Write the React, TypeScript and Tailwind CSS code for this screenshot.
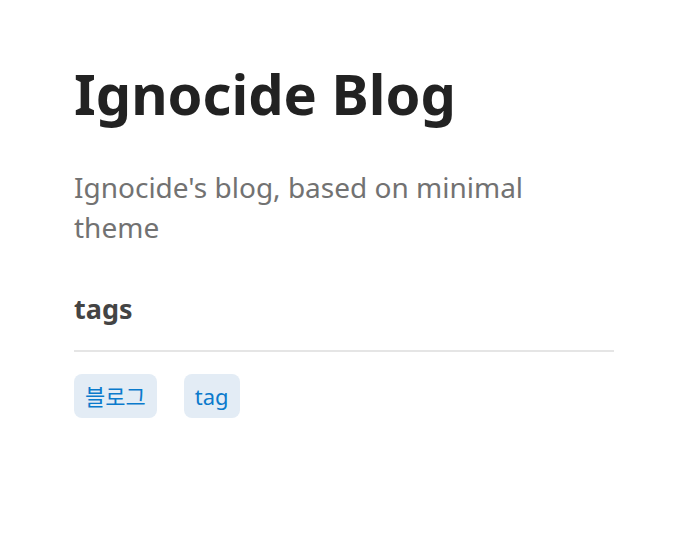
export default function App() {
  const tags = ["블로그", "tag"];

  return (
    <div
      className="min-h-[552px] bg-white pl-[74px] pt-[60px]"
      style={{ fontFamily: '"Noto Sans", "Noto Sans CJK KR", sans-serif' }}
    >
      <div className="w-[540px]">
        {/* Header */}
        <h1 className="text-[56px] font-bold leading-[1.2] text-[#222]">Ignocide Blog</h1>
        <p className="mt-[40px] w-[500px] text-[28px] leading-[40px] text-[#727272]">
          Ignocide's blog, based on minimal theme
        </p>

        {/* Tags */}
        <h2 className="mt-[42px] text-[27px] font-bold leading-[39px] text-[#444]">tags</h2>
        <div className="mt-[22px] h-[2px] bg-[#e5e5e5]" />
        <div className="mt-[22px] flex gap-[27px]">
          {tags.map((t) => (
            <span
              key={t}
              className="flex h-[44px] items-center rounded-[8px] bg-[#e3ecf5] px-[11px] text-[22px] text-[#0a7acc]"
            >
              {t}
            </span>
          ))}
        </div>
      </div>
    </div>
  );
}
